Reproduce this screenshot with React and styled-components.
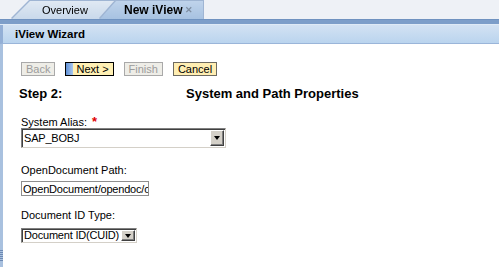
import React from 'react'
import styled, { createGlobalStyle } from 'styled-components'

const GlobalStyle = createGlobalStyle`
  html, body {
    margin: 0;
    padding: 0;
    background: #ffffff;
    font-family: "Liberation Sans", Arial, sans-serif;
  }
`

const App = () => {
  return (
    <>
      <GlobalStyle />
      <Page>
        <TabStrip>
          <Tab>
            <TabFace>Overview</TabFace>
          </Tab>
          <Tab $active>
            <TabFace $active>
              New iView <CloseMark>✕</CloseMark>
            </TabFace>
          </Tab>
        </TabStrip>
        <TopBand />
        <Header>iView Wizard</Header>

        <Body>
          <Rail>
            <Grip />
          </Rail>
          <Content>
            <ButtonRow>
              <WizardButton disabled>Back</WizardButton>
              <WizardButton $primary>Next &gt;</WizardButton>
              <WizardButton disabled>Finish</WizardButton>
              <WizardButton $cancel>Cancel</WizardButton>
            </ButtonRow>

            <StepRow>
              <span>Step 2:</span>
              <span>System and Path Properties</span>
            </StepRow>

            <Field $top={13} $gap={0}>
              <Label>
                System Alias: <Required>*</Required>
              </Label>
              <SelectBox $width={205} $height={20}>
                <SelectText>SAP_BOBJ</SelectText>
                <ArrowButton>
                  <Arrow />
                </ArrowButton>
              </SelectBox>
            </Field>

            <Field $top={16} $gap={4}>
              <Label>OpenDocument Path:</Label>
              <TextInput readOnly value="OpenDocument/opendoc/openDocument.jsp" />
            </Field>

            <Field $top={13} $gap={6}>
              <Label>Document ID Type:</Label>
              <SelectBox $width={116} $height={15}>
                <SelectText>Document ID(CUID)</SelectText>
                <ArrowButton>
                  <Arrow />
                </ArrowButton>
              </SelectBox>
            </Field>
          </Content>
        </Body>
      </Page>
    </>
  )
}

const Page = styled.div`
  width: 499px;
  height: 267px;
  overflow: hidden;
  display: flex;
  flex-direction: column;
`

const TabStrip = styled.div`
  height: 19px;
  background: #eef1f6;
  display: flex;
  align-items: flex-end;
  padding-left: 12px;
`

const Tab = styled.div`
  height: 18px;
  margin-left: ${p => (p.$active ? '-20px' : '0')};
  filter: drop-shadow(1px 0 0 #9fb5d3) drop-shadow(-1px 0 0 #9fb5d3) drop-shadow(0 -1px 0 #9fb5d3);
  position: relative;
  z-index: ${p => (p.$active ? 2 : 1)};
`

const TabFace = styled.div`
  height: 18px;
  box-sizing: border-box;
  display: flex;
  align-items: center;
  font-size: ${p => (p.$active ? '12px' : '11px')};
  font-weight: ${p => (p.$active ? 700 : 400)};
  color: #000;
  width: ${p => (p.$active ? '103px' : '108px')};
  padding-left: ${p => (p.$active ? '24px' : '30px')};
  background: ${p =>
    p.$active
      ? 'linear-gradient(#bfd3eb, #a7c2e1)'
      : 'linear-gradient(#e0e9f3, #c9d9eb)'};
  clip-path: ${p =>
    p.$active
      ? 'polygon(0 100%, 16px 0, 100% 0, 100% 100%)'
      : 'polygon(0 100%, 18px 0, 100% 0, 100% 100%)'};
`

const CloseMark = styled.span`
  color: #7f8fa3;
  font-size: 9px;
  font-weight: 700;
  margin-left: 3px;
`

const TopBand = styled.div`
  height: 4px;
  background: #7d9ec9;
  border-top: 1px solid #6f92c0;
  border-bottom: 1px solid #dfeaf6;
`

const Header = styled.div`
  height: 18px;
  line-height: 18px;
  padding-left: 12px;
  border-left: 3px solid #93afd6;
  border-bottom: 1px solid #9ab5d9;
  background: linear-gradient(#d3e2f3, #bad4ee);
  font-size: 11.5px;
  font-weight: 700;
  color: #000;
`

const Body = styled.div`
  flex: 1;
  display: flex;
`

const Rail = styled.div`
  width: 3px;
  background: #a9c1df;
  display: flex;
  flex-direction: column;
  justify-content: flex-end;
  padding-bottom: 6px;
`

const Grip = styled.div`
  height: 11px;
  background: repeating-linear-gradient(#6d89b3 0 1px, transparent 1px 2px);
`

const Content = styled.div`
  flex: 1;
  padding: 18px 0 0 18px;
  display: flex;
  flex-direction: column;
  align-items: flex-start;
`

const ButtonRow = styled.div`
  display: flex;
  gap: 10px;
`

const WizardButton = styled.button`
  height: 14px;
  box-sizing: border-box;
  padding: ${p => (p.$primary ? '0 4px 0 10px' : '0 4px')};
  font-family: "Liberation Sans", Arial, sans-serif;
  font-size: 11px;
  line-height: 12px;
  border: 1px solid #a9a9a9;
  background: #eeede7;
  color: #9c9c9c;

  ${p =>
    p.$primary &&
    `
    border-color: #000;
    color: #000;
    background: linear-gradient(90deg, #5f90d6, #a9c7ee) no-repeat 0 0 / 7px 100%, #fff0b4;
  `}

  ${p =>
    p.$cancel &&
    `
    border-color: #6d6a60;
    color: #000;
    background: #ffeeb2;
  `}
`

const StepRow = styled.div`
  display: grid;
  grid-template-columns: 167px auto;
  margin: 10px 0 0 -2px;
  font-size: 13px;
  font-weight: 700;
  line-height: 16px;
  color: #000;
`

const Field = styled.div`
  display: flex;
  flex-direction: column;
  align-items: flex-start;
  margin-top: ${p => p.$top}px;
  gap: ${p => p.$gap}px;
`

const Label = styled.div`
  height: 13px;
  font-size: 11px;
  line-height: 13px;
  color: #000;
  white-space: nowrap;
`

const Required = styled.span`
  color: #e00000;
  font-weight: 700;
  font-size: 13px;
  margin-left: 2px;
`

const SelectBox = styled.div`
  width: ${p => p.$width}px;
  height: ${p => p.$height}px;
  box-sizing: border-box;
  display: flex;
  align-items: stretch;
  background: #fff;
  border-style: solid;
  border-width: 1px;
  border-color: #808080 #d4d0c8 #d4d0c8 #808080;
  box-shadow: inset 1px 1px 0 #404040;
  padding: 1px;
`

const SelectText = styled.span`
  flex: 1;
  font-size: 11px;
  letter-spacing: -0.2px;
  line-height: 13px;
  padding-left: 1px;
  display: flex;
  align-items: center;
  white-space: nowrap;
  overflow: hidden;
`

const ArrowButton = styled.span`
  width: 14px;
  box-sizing: border-box;
  background: #d4d0c8;
  border-style: solid;
  border-width: 1px;
  border-color: #ffffff #404040 #404040 #ffffff;
  box-shadow: inset -1px -1px 0 #808080;
  display: flex;
  align-items: center;
  justify-content: center;
`

const Arrow = styled.span`
  width: 0;
  height: 0;
  border-left: 3.5px solid transparent;
  border-right: 3.5px solid transparent;
  border-top: 4px solid #000;
`

const TextInput = styled.input`
  width: 128px;
  height: 15px;
  box-sizing: border-box;
  border: 1px solid #8e8e8e;
  padding: 0 0 0 1px;
  margin: 0;
  font-family: "Liberation Sans", Arial, sans-serif;
  font-size: 11px;
  letter-spacing: -0.2px;
  color: #000;
  outline: none;
`

export default App
